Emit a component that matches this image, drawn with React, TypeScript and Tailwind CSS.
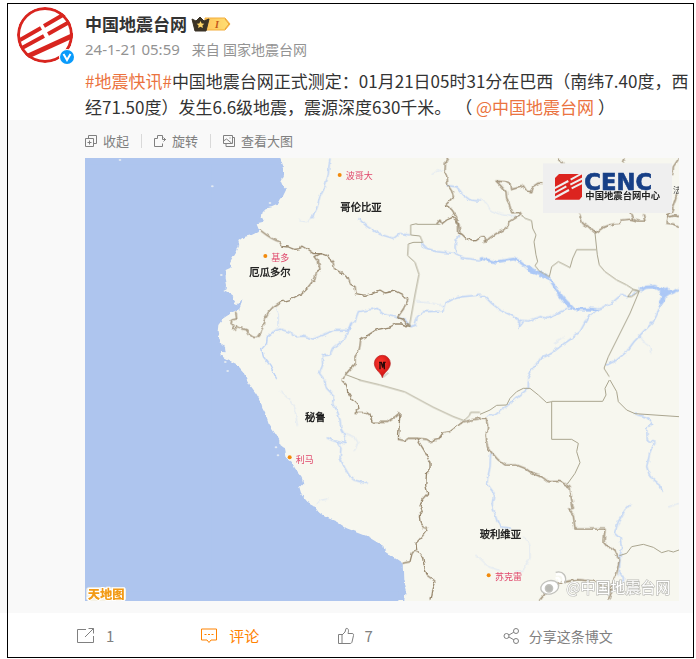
import type { ReactNode } from 'react'

const fontStack = "font-['Noto_Sans_CJK_SC',sans-serif]"

const SEA =
  '0,0 586,0 597,31 597,51 588,71 593,83 603,96 593,116 585,122 583,126 575,141 560,148 545,151 533,163 530,176 535,186 530,196 515,199 518,206 522,216 517,223 500,231 475,238 460,249 463,261 455,281 440,306 435,316 437,329 422,336 422,361 426,381 425,394 415,399 435,409 445,416 450,431 443,441 455,444 472,423 468,441 463,453 445,461 415,481 400,501 398,521 403,541 410,561 420,566 422,583 405,581 407,593 430,606 455,619 475,641 485,664 495,681 513,706 525,726 532,751 543,771 553,801 570,826 583,846 583,861 600,874 605,901 620,911 630,931 650,956 655,976 643,988 650,1011 667,1031 685,1041 700,1061 720,1076 755,1091 785,1111 845,1134 895,1164 900,1181 930,1201 953,1216 955,1266 962,1296 958,1329 0,1329'

// The lines are stored per map tile, in that tile's own units.
const tiles = [
  {
    at: 'translate(-15 -9)',
    borders: [
      '540,225 560,240 575,250 590,257 603,261',
      '467,470 470,492 455,495 453,505 462,512 456,523 467,522 470,514 485,520 500,525 507,538 520,547 530,548 540,535 548,518 552,495 565,472 580,455 602,441',
    ],
    states: [],
    rivers: ['600,522 580,530 562,545 560,565 545,582 550,605 570,630 590,672'],
    faint: ['588,457 596,480 596,515 580,530'],
  },
  {
    at: 'translate(585 -9)',
    borders: [
      '0,262 5,274 25,276 42,283 60,281 65,273 80,282 100,296 122,296 140,302 158,320 165,342 185,355 205,370 212,388 225,395 228,416 255,421 275,415 300,405 315,414 345,408 365,418 384,434',
      '122,296 105,305 115,318 120,343 110,350 105,370 85,395 62,417 30,434 0,442',
      '384,434 370,462 352,488 368,492 388,514',
      '503,8 496,25 495,50 502,70 503,90 515,108 520,125 508,138 495,152 508,155 522,175 535,200 540,234',
      '470,207 480,195 485,207 500,195 518,187 532,200 533,235 545,237 558,250 575,258 590,256 600,248',
      '388,515 365,507 345,507 330,516 290,524 262,542 242,555 238,585 225,605 225,628 208,645 195,660 187,672',
    ],
    states: [
      '480,208 410,208 410,206 392,210 392,240 420,243 428,262 400,262 385,267 383,302 405,322 417,358 405,420 388,515',
      '195,658 240,675',
    ],
    rivers: [
      '0,522 30,532 48,545 68,543 100,552 130,540 160,526 205,525 212,505 225,498 235,470 262,465 292,460 310,478 345,486 375,493 390,515 405,510 412,485 430,470 488,468 495,445 520,432 545,425 600,420',
      '215,505 205,530 185,560 158,582 150,600 127,602 128,630 118,655 132,672',
      '150,10 145,55 135,95 120,125 110,160 95,190',
      '235,190 262,215 300,238 340,250 360,235 390,240',
      '425,265 435,278 470,290 520,295 545,308 600,315',
      '500,92 530,95 550,120 570,135 600,138',
      '540,237 528,255 525,275 528,295',
    ],
    faint: ['95,190 80,200 55,197', '408,440 440,443 475,448 490,455', '455,55 475,47 495,45'],
  },
  {
    at: 'translate(1185 -9)',
    borders: [
      '0,246 12,245 14,262 30,248 50,235 70,225 85,212 90,200 108,188 125,180 120,172 95,173 88,148 80,132 78,110 62,92 48,78 75,80 90,88 92,104 120,96 130,92 140,108 152,110 158,95 175,84 200,85',
      '298,176 302,188 308,205 325,215 345,234 355,228 370,217 395,208 420,205 425,195 455,192 475,198 495,198 490,178',
      '235,10 245,20 250,28',
      '435,10 430,22',
      '597,10 580,35 578,60',
      '590,120 580,150 575,172 562,178 558,205 580,207 597,218',
      '450,172 456,185 460,195',
      '597,185 585,182 570,185 558,180',
    ],
    states: [
      '125,180 135,190 155,197 158,220 168,240 162,260 168,300 173,320 165,332 178,348 208,365 215,335 235,320 255,330 270,338 278,310 290,284 348,284',
      '345,234 352,300 358,330 375,350 410,375 440,390 460,403 478,408 455,425 443,425 458,405 478,408 450,475 420,535 385,605 372,640 388,665',
    ],
    rivers: [
      '0,425 15,425 35,445 60,465 88,478 120,495 145,498 180,485 205,490 235,475 260,463 300,462 350,462',
      '120,495 115,520 130,500',
      '350,465 322,490 300,530 275,550 240,575 215,595 180,612 155,645 142,672',
      '552,418 542,450 530,480 520,500 490,530 462,560 440,590 410,615 380,630',
      '480,405 443,425 425,418 400,440 375,455 350,465 325,458',
    ],
    faint: ['0,130 20,145 30,165 60,178 100,185 118,186', '480,540 495,565 510,575 512,597', '222,565 250,548'],
  },
  {
    at: 'translate(585 666)',
    borders: [
      '185,0 200,15 203,35 215,55 235,75 237,85 225,97 260,98 270,105 277,127 320,127 345,110 360,98 355,178 375,182 385,175 410,175 440,178 452,185 475,178 488,160 510,155 550,125 575,120 600,115',
      '410,175 435,215 450,250 450,265 440,275 437,315 443,340 425,360 420,380 427,395 418,405 420,425 430,442 443,447 430,465 408,490 410,510 428,530 432,555 440,585 465,603 455,630 450,662',
      '368,550 390,545 397,518 410,512',
    ],
    states: ['237,0 300,15 375,36 460,82 520,110 552,122', '552,122 568,107 572,97 600,97'],
    rivers: [
      '132,0 140,25 160,45 158,70 170,90 180,120 183,150 195,170 195,190 160,182 140,173',
      '168,182 183,205 180,235 195,265 210,290 222,300 260,310',
    ],
    faint: ['0,35 25,55 45,85 52,138', '195,160 225,172 235,190 222,210', '108,375 120,362 145,357', '585,525 600,535'],
  },
  {
    at: 'translate(1185 666)',
    borders: [
      '0,115 18,115 23,140 18,165 22,200 35,218 55,240 75,255 110,255 135,265 160,282 185,290 205,305 240,304 270,322 275,360 280,385 265,387 280,405 285,447 375,447 372,485 385,500 405,513 418,540 410,580 395,615 385,625 395,640 387,662',
      '178,662 200,635 240,608 290,599 340,603 380,622 398,632',
    ],
    states: [
      '0,103 30,90 50,76 80,75 90,55 110,35 130,25 150,25 175,45 200,68 215,65 215,178 275,178 295,190 290,215 300,248 285,280 262,312',
      '215,64 368,64 378,45 375,25 388,0',
      '390,0 410,35 415,65 440,90 465,101 597,110',
      '418,527 440,520 455,500 490,493 520,502 545,518 565,512 580,516 597,510',
    ],
    rivers: [
      '145,0 145,25 120,45 85,75 70,85 45,105 20,108',
      '32,220 30,260 20,310 42,340 36,375 50,420 60,440 90,445',
      '465,101 500,112 518,130 500,145 502,180 525,188 510,215 505,240 500,260 510,290 535,310 548,335',
      '452,372 435,390 415,425 403,460 420,475 425,500 420,530 418,585 430,590 430,610',
    ],
    faint: ['130,470 150,495 150,535 130,570 105,578', '0,535 25,560 60,572', '565,382 597,370'],
  },
]

const wideRivers = [
  { d: '1185,301 1230,312 1285,303 1300,308 1330,332 1380,352 1397,367 1415,395 1425,415 1452,438 1465,452 1500,453 1540,455', w: 8 },
  { d: '1328,328 1350,342 1385,354', w: 13 },
  { d: '1420,405 1436,425 1455,446', w: 13 },
  { d: '1665,396 1682,388 1710,386 1728,396 1745,400 1760,404 1782,394', w: 10 },
  { d: '1727,395 1738,408 1752,398', w: 20 },
  { d: '1738,405 1734,425 1727,442', w: 11 },
]

const islands = [[105, 6], [382, 85], [555, 135], [409, 351], [421, 612], [428, 639], [573, 868], [579, 892]]

const cities = [
  { name: '波哥大', x: 764, y: 51, tx: 782, ty: 64 },
  { name: '基多', x: 541, y: 294, tx: 559, ty: 310 },
  { name: '利马', x: 614, y: 898, tx: 632, ty: 914 },
  { name: '苏克雷', x: 1211, y: 1252, tx: 1230, ty: 1266 },
]

const countries = [
  { name: '哥伦比亚', x: 766, y: 160 },
  { name: '厄瓜多尔', x: 493, y: 354 },
  { name: '秘鲁', x: 660, y: 788 },
  { name: '玻利维亚', x: 1184, y: 1140 },
]

function Lines({ list, color, width }: { list: string[]; color: string; width: number }) {
  return (
    <>
      {list.map((points) => (
        <polyline key={points} points={points} fill="none" stroke={color} strokeWidth={width} strokeLinejoin="round" />
      ))}
    </>
  )
}

function QuakeMap() {
  return (
    <svg viewBox="0 0 1782 1329" className="block w-full" role="img" aria-label="震中位置图">
      <defs>
        <filter id="rough" x="-5%" y="-5%" width="110%" height="110%">
          <feTurbulence type="fractalNoise" baseFrequency="0.06" numOctaves="2" seed="4" />
          <feDisplacementMap in="SourceGraphic" scale="12" xChannelSelector="R" yChannelSelector="G" />
        </filter>
        <radialGradient id="pin" cx="0.4" cy="0.35" r="0.7">
          <stop offset="0" stopColor="#ff3b30" />
          <stop offset="1" stopColor="#c80d0d" />
        </radialGradient>
      </defs>
      <rect width="1782" height="1329" fill="#f7f7ef" />
      <polygon points={SEA} fill="#aec5ee" filter="url(#rough)" />
      <rect width="380" height="1329" fill="#aec5ee" />
      <rect y="1300" width="940" height="29" fill="#aec5ee" />
      <rect width="570" height="20" fill="#aec5ee" />
      {islands.map(([x, y]) => (
        <ellipse key={`${x}-${y}`} cx={x} cy={y} rx="4" ry="3" fill="#e3eaf2" />
      ))}
      <g filter="url(#rough)">
        {tiles.map((tile) => (
          <g key={tile.at} transform={tile.at}>
            <Lines list={tile.faint} color="#dbe5f3" width={3} />
            <Lines list={tile.rivers} color="#b9d0f6" width={4} />
          </g>
        ))}
        {wideRivers.map((r) => (
          <polyline key={r.d} points={r.d} fill="none" stroke="#acc8f6" strokeWidth={r.w} strokeLinejoin="round" />
        ))}
        {tiles.map((tile) => (
          <g key={tile.at} transform={tile.at}>
            <Lines list={tile.borders} color="#99896f" width={4} />
          </g>
        ))}
      </g>
      {tiles.map((tile) => (
        <g key={tile.at} transform={tile.at}>
          <Lines list={tile.states} color="#aaa58f" width={3} />
        </g>
      ))}

      <g className={fontStack}>
        {cities.map((c) => (
          <g key={c.name}>
            <circle cx={c.x} cy={c.y} r="6" fill="#f28a0c" />
            <text x={c.tx} y={c.ty} fontSize="27" fill="#e0476b">{c.name}</text>
          </g>
        ))}
        {countries.map((c) => (
          <text key={c.name} x={c.x} y={c.y} fontSize="31" fontWeight="400" fill="#111" stroke="#111" strokeWidth="1">
            {c.name}
          </text>
        ))}
        <text x="1764" y="106" fontSize="24" fill="#333">法</text>
      </g>

      {/* epicentre */}
      <path d="M894 658l16-14" stroke="#d6d6ce" strokeWidth="6" />
      <path d="M892 659c-3-15-24-23-24-43a24 24 0 0 1 48 0c0 20-21 28-24 43z" fill="url(#pin)" stroke="#b51616" strokeWidth="2" />
      <path d="M885 634v-22m-3 1h7l4 16 3-16h6M898 634v-22" fill="none" stroke="#2a0808" strokeWidth="4" />

      {/* agency logo */}
      <rect x="1374" y="16" width="387" height="149" fill="#efefef" />
      <path d="M1422 48h69v68l-8 9h-73V60z" fill="#dc241f" />
      <path d="M1408 91l42-22m7-4l36-20M1408 105l36-20m12-5l37-19M1408 120l44-24m8-5l34-17" stroke="#efefef" strokeWidth="6" />
      <text x="1498" y="95" fontSize="68" fontWeight="900" fill="#173f86" stroke="#173f86" strokeWidth="2" className="font-['DejaVu_Sans',sans-serif]">CENC</text>
      <text x="1501" y="124" fontSize="28" fontWeight="700" fill="#222" className={fontStack}>中国地震台网中心</text>

      {/* map provider */}
      <rect x="4" y="1288" width="119" height="41" rx="8" fill="#f5f2e6" />
      <text x="8" y="1322" fontSize="37" fontWeight="900" fill="#f29a16" stroke="#fff" strokeWidth="6" paintOrder="stroke" className={fontStack}>天地图</text>

      {/* watermark */}
      <g fill="none" stroke="#c2c2bd" strokeWidth="4">
        <ellipse cx="1394" cy="1288" rx="27" ry="20" fill="#fff" transform="rotate(-14 1394 1288)" />
        <circle cx="1392" cy="1291" r="11" fill="#b9b9b4" />
        <path d="M1412 1262c8-5 15 2 10 11M1413 1250c19-5 27 8 20 25" stroke="#fff" strokeWidth="7" />
        <path d="M1412 1243c23-6 35 12 28 34" />
      </g>
      <text x="1444" y="1304" fontSize="45" fontWeight="400" fill="#fff" stroke="#bdbdb8" strokeWidth="4" paintOrder="stroke" className={fontStack}>@中国地震台网</text>
    </svg>
  )
}

function Avatar() {
  return (
    <svg viewBox="0 0 58 58" className="size-[58px]" role="img" aria-label="中国地震台网">
      <clipPath id="face"><circle cx="28" cy="28" r="28" /></clipPath>
      <circle cx="28" cy="28" r="28" fill="#fff" />
      <g clipPath="url(#face)" fill="none" stroke="#d8251f" strokeWidth="4">
        <circle cx="28" cy="28" r="26.5" strokeWidth="3" />
        <path d="M3 33l21-12M27 19l24-14M5 41l22-12M31 27l25-14" />
        <path d="M9 50l48-22" strokeWidth="5" />
      </g>
      <circle cx="50" cy="50" r="8" fill="#fff" />
      <circle cx="50" cy="50" r="7" fill="#0a9bfb" />
      <path d="M46.500 47l3.500 6 3.500-6" fill="none" stroke="#fff" strokeWidth="2" />
    </svg>
  )
}

function VipBadge() {
  return (
    <svg viewBox="0 0 42 16" className="h-4 w-[42px]" aria-hidden="true">
      <defs>
        <linearGradient id="gold">
          <stop offset="0" stopColor="#ffc55a" />
          <stop offset="1" stopColor="#ffe074" />
        </linearGradient>
      </defs>
      <path d="M14 2h20l5 6-5 6H14z" fill="url(#gold)" stroke="#f3ae3c" />
      <path d="M34 3l4 5-4 5" fill="none" stroke="#eda036" />
      <path d="M1 3l4 2 4-4 4 4 5-2-3 12H4z" fill="#3b3326" stroke="#3b3326" strokeLinejoin="round" />
      <path d="M9.500 5l1.200 2.400 2.600.3-1.900 1.800.5 2.600-2.400-1.300-2.400 1.300.5-2.600-1.900-1.800 2.600-.3z" fill="#ffd76b" />
      <text x="24" y="12" fontSize="10" fontWeight="700" fontStyle="italic" fill="#c4571b" className="font-['Liberation_Serif',serif]">I</text>
    </svg>
  )
}

function Icon({ size, children }: { size: 'sm' | 'md'; children: ReactNode }) {
  return (
    <svg
      viewBox={size === 'sm' ? '0 0 12 12' : '0 0 18 18'}
      className={size === 'sm' ? 'size-3' : 'size-[18px]'}
      fill="none"
      stroke="currentColor"
      aria-hidden="true"
    >
      {children}
    </svg>
  )
}

function ToolButton({ icon, label }: { icon: ReactNode; label: string }) {
  return (
    <button type="button" className="flex items-center gap-[6px] text-[13px] leading-5">
      <Icon size="sm">{icon}</Icon>
      {label}
    </button>
  )
}

export default function App() {
  return (
    <div className={`relative bg-white pt-[3px] pb-[2px] text-[#333] ${fontStack}`}>
      <article className="pr-[2px]">
        <header className="flex gap-[10px] pt-1 pl-[17px]">
          <Avatar />
          <div className="pt-1">
            <div className="flex items-center gap-1">
              <a href="#user" className="text-[17px] leading-[25px] font-bold">中国地震台网</a>
              <VipBadge />
            </div>
            <div className="flex items-center gap-3 leading-[26px] text-[#939393]">
              <time className="font-['Noto_Sans','Noto_Sans_CJK_SC',sans-serif] text-[15px]">24-1-21 05:59</time>
              <span className="text-sm leading-[26px]">来自 国家地震台网</span>
            </div>
          </div>
        </header>

        <p className="mt-[3px] pl-[85px] text-[17px] leading-[26px]">
          <a href="#topic" className="text-[#eb7340]">#地震快讯#</a>
          <span>中国地震台网正式测定：01月21日05时31分在巴西（南纬7.40度，西经71.50度）发生6.6级地震，震源深度630千米。 （</span>{' '}
          <a href="#mention" className="text-[#eb7340]">@中国地震台网</a> ）
        </p>

        <section className="bg-[#f9f9f9] pt-[11px] pr-[15px] pb-3 pl-[85px]">
          <div className="mb-[7px] flex items-center gap-3 text-[#808080]">
            <ToolButton
              label="收起"
              icon={<path d="M.5 3.500h8v8h-8zM3.500 3.500v-3h8v8h-3M4.500 5.500v4M2.500 7.500h4" />}
            />
            <span className="h-[14px] w-px bg-[#d9d9d9]" />
            <ToolButton label="旋转" icon={<path d="M8.500 8.500v3h-8v-8h3M3.500 3.500v-3h5v4H12M9.500 2.500l2 2-2 2" />} />
            <span className="h-[14px] w-px bg-[#d9d9d9]" />
            <ToolButton
              label="查看大图"
              icon={<path d="M.5.500h9v8h-9zM.5 6l3-2 5 4M6.500 3h1M3 8.500v3h8.500v-9h-2" />}
            />
          </div>
          <QuakeMap />
        </section>

        <footer className="grid h-11 grid-cols-[123fr_137fr_165fr_191fr] pt-[2px] pl-[77px] text-[#808080]">
          <button type="button" className="flex items-center gap-[11px] text-[15px]">
            <Icon size="md"><path d="M9 2.500H.5v13h16V9M11.500 1.500h5v5M16.500 1.500L8 10" /></Icon>
            1
          </button>
          <button type="button" className="flex items-center gap-[11px] text-[15px] text-[#ff8200]">
            <Icon size="md"><path d="M1.500 2h15v11H11l-2 2.500L7 13H1.500zM4.500 7.500h2m1.500 0h2m1.500 0h2" /></Icon>
            评论
          </button>
          <button type="button" className="flex items-center gap-[9px] text-[15px]">
            <Icon size="md"><path d="M1.500 7.500H5v9H1.500zM5 8l3-3 1-3.500c2.500-.5 3 1.500 2 5H15c1.500 0 1.800 1 1.500 2L15 15c-.3 1-1 1.500-2 1.500H5" /></Icon>
            7
          </button>
          <button type="button" className="flex items-center gap-2 text-sm">
            <Icon size="md">
              <circle cx="3.500" cy="9" r="2.500" />
              <circle cx="13" cy="4" r="2.500" />
              <circle cx="13" cy="14" r="2.500" />
              <path d="M6 8l4.800-2.800M6 10l4.800 2.800" />
            </Icon>
            分享这条博文
          </button>
        </footer>
      </article>
      <div className="pointer-events-none absolute top-[3px] right-[2px] bottom-px left-[7px] border border-black" />
    </div>
  )
}
